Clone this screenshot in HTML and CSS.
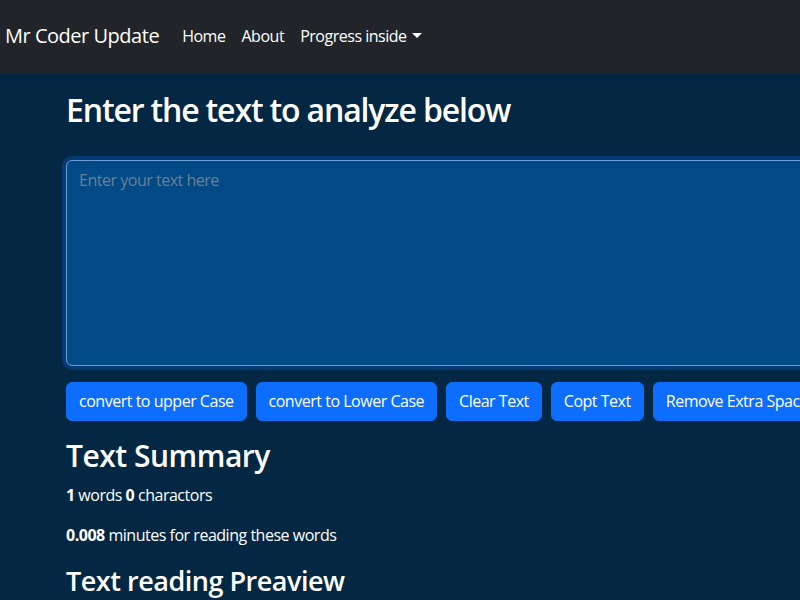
FILE: index.html
```html
<!DOCTYPE html>
<html lang="en">
<head>
<meta charset="utf-8">
<title>Mr Coder Update</title>
<link rel="stylesheet" href="styles.css">
</head>
<body>
<nav class="navbar">
  <a class="brand" href="#">Mr Coder Update</a>
  <ul class="nav-links">
    <li><a class="nav-link" href="#">Home</a></li>
    <li><a class="nav-link" href="#">About</a></li>
    <li><a class="nav-link dropdown-toggle" href="#">Progress inside</a></li>
  </ul>
</nav>
<main class="container">
  <h1 class="title">Enter the text to analyze below</h1>
  <div class="field">
    <textarea class="text-input" rows="8" placeholder="Enter your text here"></textarea>
  </div>
  <div class="actions">
    <button class="btn">convert to upper Case</button>
    <button class="btn">convert to Lower Case</button>
    <button class="btn">Clear Text</button>
    <button class="btn">Copt Text</button>
    <button class="btn">Remove Extra Spaces</button>
  </div>
  <section class="summary">
    <h2 class="section-title">Text Summary</h2>
    <p class="stat"><b>1</b> words <b>0</b> charactors</p>
    <p class="stat"><b>0.008</b> minutes for reading these words</p>
    <h3 class="sub-title">Text reading Preaview</h3>
  </section>
</main>
</body>
</html>
```

FILE: styles.css
```css
* { box-sizing: border-box; }
html, body { margin: 0; padding: 0; overflow: hidden; }
body {
  background: #042743;
  color: #ffffff;
  font-family: "Open Sans", "Noto Sans", sans-serif;
  font-size: 16px;
  line-height: 1.5;
  letter-spacing: -0.03em;
  width: 800px;
  height: 600px;
}
.navbar {
  background: #212529;
  height: 73px;
  display: flex;
  align-items: center;
  padding: 0 5px 2px;
}
.brand {
  color: #fff;
  text-decoration: none;
  font-size: 20px;
  margin-right: 15px;
}
.nav-links {
  display: flex;
  list-style: none;
  margin: 0;
  padding: 0;
}
.nav-link {
  display: block;
  color: #fff;
  text-decoration: none;
  padding: 8px;
}
.dropdown-toggle::after {
  content: "";
  display: inline-block;
  margin-left: 5px;
  vertical-align: 4px;
  border-top: 5px solid;
  border-right: 5px solid transparent;
  border-left: 5px solid transparent;
}
.container {
  padding-left: 66px;
  width: 1000px;
}
.title {
  font-size: 32px;
  font-weight: 600;
  line-height: 1.2;
  letter-spacing: -0.036em;
  margin: 18px 0 31px;
}
.field { margin-bottom: 16px; }
.text-input {
  display: block;
  width: 900px;
  height: 206px;
  background: #024a86;
  border: 1px solid #6e9cd6;
  border-radius: 6px;
  box-shadow: 0 0 0 4px rgba(13, 110, 253, .25);
  color: #fff;
  font: inherit;
  letter-spacing: inherit;
  padding: 7px 12px 6px;
  outline: none;
  resize: none;
}
.text-input::placeholder { color: #6c7f93; }
.actions {
  display: flex;
  gap: 9px;
  white-space: nowrap;
}
.btn {
  background: #0d6efd;
  color: #fff;
  border: 1px solid #0d6efd;
  border-radius: 6px;
  font: inherit;
  letter-spacing: inherit;
  padding: 6px 12px 7px;
  flex: none;
}
.summary { margin-top: 17px; }
.section-title {
  font-size: 30px;
  font-weight: 600;
  line-height: 1.2;
  margin: 0 0 9px;
}
.sub-title {
  font-size: 27px;
  font-weight: 600;
  line-height: 1.2;
  margin: 0;
  padding-top: 2px;
}
.stat { margin: 0 0 16px; }
.stat b { font-weight: 700; }
```
